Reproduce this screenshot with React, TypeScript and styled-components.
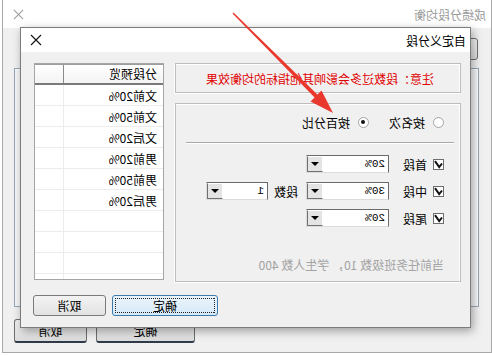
import React from 'react';
import styled, { createGlobalStyle } from 'styled-components';

const GlobalStyle = createGlobalStyle`
  html, body { margin: 0; padding: 0; background: #fff; }
  body {
    font-family: "Noto Sans CJK SC", "Noto Sans", sans-serif;
    font-size: 12px;
    color: #000;
  }
`;

const Stage = styled.div`
  position: relative;
  width: 492px;
  height: 356px;
  overflow: hidden;
  background: #ffffff;
  transform: scaleX(-1);
`;

/* ---------- background window ---------- */
const BackWindow = styled.div`
  position: absolute;
  left: 0;
  top: -1px;
  width: 490px;
  height: 354px;
  box-sizing: border-box;
  border: 1px solid #a9a9a9;
  background: #f0f0f0;
  display: flex;
  flex-direction: column;
`;

const BackTitleBar = styled.div`
  height: 28px;
  background: #fff;
  display: flex;
  align-items: center;
  justify-content: space-between;
  padding: 0 10px 0 5px;
  color: #9a9a9a;
  flex-shrink: 0;
`;

const BackBody = styled.div`
  flex: 1;
  display: flex;
  flex-direction: column;
  padding: 10px 11px 0 12px;
`;

const BackTopButton = styled.div`
  width: 70px;
  height: 22px;
  box-sizing: border-box;
  border: 1px solid #707070;
  border-radius: 3px;
  background: linear-gradient(#f4f4f4, #dedede);
  margin-left: 1px;
`;

const BackPanel = styled.div`
  margin-top: 8px;
  height: 239px;
  box-sizing: border-box;
  border: 1px solid #98a6b5;
  background: #f6f7f8;
  box-shadow: inset 1px 1px 0 #fff;
`;

const BackButtons = styled.div`
  margin-top: 12px;
  display: flex;
  justify-content: flex-end;
  gap: 9px;
`;

const BackButton = styled.div<{ $w: number }>`
  width: ${(p) => p.$w}px;
  height: 24px;
  box-sizing: border-box;
  border: 1px solid #6f6f6f;
  border-bottom: 2px solid #2f3b48;
  border-radius: 3px;
  background: linear-gradient(#f2f2f2, #dcdcdc);
  display: flex;
  align-items: center;
  justify-content: center;
`;

/* ---------- foreground dialog ---------- */
const Dialog = styled.div`
  position: absolute;
  left: 21px;
  top: 27px;
  width: 451px;
  height: 301px;
  box-sizing: border-box;
  border: 1px solid #7c7c7c;
  background: #f0f0f0;
  box-shadow: -2px 3px 9px rgba(0, 0, 0, 0.35);
  display: flex;
  flex-direction: column;
`;

const TitleBar = styled.div`
  height: 24px;
  background: #fff;
  display: flex;
  align-items: center;
  justify-content: space-between;
  padding: 0 9px 0 4px;
  flex-shrink: 0;
`;

const DialogBody = styled.div`
  flex: 1;
  display: flex;
  flex-direction: column;
  padding: 11px 12px 10px 9px;
`;

const MainRow = styled.div`
  display: flex;
  gap: 11px;
  height: 219px;
`;

const LeftColumn = styled.div`
  width: 286px;
  display: flex;
  flex-direction: column;
  gap: 10px;
`;

const Notice = styled.div`
  height: 30px;
  box-sizing: border-box;
  border: 1px solid #bdbdbd;
  box-shadow: inset 1px 1px 0 #fff, 1px 1px 0 #fff;
  display: flex;
  align-items: center;
  padding-left: 26px;
  color: #e00000;
`;

const Group = styled.div`
  height: 179px;
  box-sizing: border-box;
  border: 1px solid #bdbdbd;
  box-shadow: inset 1px 1px 0 #fff, 1px 1px 0 #fff;
  padding: 10px 0 0 16px;
  display: flex;
  flex-direction: column;
`;

const RadioRow = styled.div`
  height: 16px;
  display: flex;
  align-items: center;
`;

const RadioItem = styled.label<{ $gapAfter?: number }>`
  display: flex;
  align-items: center;
  gap: 8px;
  margin-right: ${(p) => p.$gapAfter ?? 0}px;
`;

const RadioCircle = styled.span<{ $on?: boolean }>`
  width: 11px;
  height: 11px;
  box-sizing: border-box;
  border-radius: 50%;
  border: 1px solid #a4a4a4;
  background: #fff;
  display: flex;
  align-items: center;
  justify-content: center;
  &::after {
    content: '';
    width: 4px;
    height: 4px;
    border-radius: 50%;
    background: ${(p) => (p.$on ? '#111' : 'transparent')};
  }
`;

const Separator = styled.div`
  margin: 12px 0 0 -10px;
  width: 268px;
  height: 1px;
  background: #a8a8a8;
  box-shadow: 0 1px 0 #fff;
`;

const SegRows = styled.div`
  margin-top: 12px;
  display: flex;
  flex-direction: column;
  gap: 9px;
`;

const SegRow = styled.div`
  height: 18px;
  display: flex;
  align-items: center;
`;

const CheckBox = styled.span`
  width: 11px;
  height: 11px;
  box-sizing: border-box;
  border: 1px solid #6e6e6e;
  background: #fff;
  display: flex;
  align-items: center;
  justify-content: center;
`;

const SegLabel = styled.span<{ $w: number }>`
  width: ${(p) => p.$w}px;
  padding-left: 6px;
  box-sizing: border-box;
`;

const Combo = styled.div<{ $w: number }>`
  width: ${(p) => p.$w}px;
  height: 18px;
  box-sizing: border-box;
  border-top: 1px solid #6a6a6a;
  border-left: 1px solid #6a6a6a;
  border-right: 1px solid #dcdcdc;
  border-bottom: 1px solid #dcdcdc;
  background: #fff;
  display: flex;
  align-items: stretch;
`;

const ComboText = styled.span`
  flex: 1;
  padding-left: 3px;
  font-family: "Liberation Mono", "DejaVu Sans Mono", monospace;
  font-size: 11px;
  line-height: 16px;
`;

const ComboArrow = styled.span`
  width: 16px;
  box-sizing: border-box;
  border-top: 1px solid #fff;
  border-left: 1px solid #fff;
  border-right: 1px solid #707070;
  border-bottom: 1px solid #707070;
  background: #e4e4e4;
  display: flex;
  align-items: center;
  justify-content: center;
  &::after {
    content: '';
    border-left: 4px solid transparent;
    border-right: 4px solid transparent;
    border-top: 4px solid #000;
  }
`;

const CountLabel = styled.span`
  margin: 0 6px 0 8px;
`;

const Footer = styled.div`
  margin-top: 29px;
  color: #a3a3a3;
`;

/* list */
const ListBox = styled.div`
  width: 130px;
  height: 217px;
  box-sizing: border-box;
  border: 1px solid #a5a5a5;
  background: #fff;
  display: flex;
  flex-direction: column;
  overflow: hidden;
`;

const ListHeader = styled.div`
  height: 18px;
  flex-shrink: 0;
  display: grid;
  grid-template-columns: 100px 1fr;
  border-top: 1px solid #9d9d9d;
  border-bottom: 2px solid #7a7a7a;
  background: linear-gradient(#ffffff, #f3f3f3);
`;

const HeaderCell = styled.div<{ $divider?: boolean }>`
  display: flex;
  align-items: center;
  padding-left: 6px;
  border-right: ${(p) => (p.$divider ? '1px solid #8a8a8a' : 'none')};
  line-height: 1;
`;

const ListRow = styled.div`
  height: 21px;
  flex-shrink: 0;
  box-sizing: border-box;
  display: grid;
  grid-template-columns: 100px 1fr;
  border-bottom: 1px solid #ececec;
`;

const Cell = styled.div<{ $divider?: boolean }>`
  display: flex;
  align-items: center;
  padding-left: 6px;
  border-right: ${(p) => (p.$divider ? '1px solid #ececec' : 'none')};
`;

const ButtonRow = styled.div`
  margin-top: 13px;
  display: flex;
  justify-content: flex-end;
  gap: 6px;
`;

const Button = styled.button<{ $w: number; $focused?: boolean }>`
  width: ${(p) => p.$w}px;
  height: 21px;
  box-sizing: border-box;
  border: 1px solid ${(p) => (p.$focused ? '#3d7bad' : '#7a7a7a')};
  border-radius: 3px;
  background: ${(p) =>
    p.$focused ? 'linear-gradient(#eaf4fb, #d6e9f7)' : 'linear-gradient(#f3f3f3, #e2e2e2)'};
  font: inherit;
  color: #000;
  padding: 0;
  position: relative;
  display: flex;
  align-items: center;
  justify-content: center;
  &::before {
    content: '';
    display: ${(p) => (p.$focused ? 'block' : 'none')};
    position: absolute;
    inset: 2px;
    border: 1px dotted #222;
  }
`;

const ArrowLayer = styled.svg`
  position: absolute;
  left: 0;
  top: 0;
  width: 492px;
  height: 356px;
  pointer-events: none;
`;

const CloseIcon: React.FC<{ size: number; color: string }> = ({ size, color }) => (
  <svg width={size} height={size} viewBox="0 0 12 12">
    <path d="M1 1 L11 11 M11 1 L1 11" stroke={color} strokeWidth="1.1" fill="none" />
  </svg>
);

const Check = () => (
  <svg width="9" height="9" viewBox="0 0 9 9">
    <path d="M1 3.5 L3.8 7 L8 1.2" stroke="#111" strokeWidth="2" fill="none" />
  </svg>
);

const listItems = ['文前20%', '文前50%', '文后20%', '男前20%', '男前50%', '男后20%', '', '', '', ''];

const segs = [
  { name: '首段', val: '20%', count: false },
  { name: '中段', val: '30%', count: true },
  { name: '尾段', val: '20%', count: false },
];

export default function App() {
  return (
    <>
      <GlobalStyle />
      <Stage>
        <BackWindow>
          <BackTitleBar>
            <span>成绩分段均衡</span>
            <CloseIcon size={11} color="#9a9a9a" />
          </BackTitleBar>
          <BackBody>
            <BackTopButton />
            <BackPanel />
            <BackButtons>
              <BackButton $w={99}>确定</BackButton>
              <BackButton $w={73}>取消</BackButton>
            </BackButtons>
          </BackBody>
        </BackWindow>

        <Dialog>
          <TitleBar>
            <span>自定义分段</span>
            <CloseIcon size={12} color="#111" />
          </TitleBar>
          <DialogBody>
            <MainRow>
              <LeftColumn>
                <Notice>注意：段数过多会影响其他指标的均衡效果</Notice>
                <Group>
                  <RadioRow>
                    <RadioItem $gapAfter={20}>
                      <RadioCircle />
                      <span>按名次</span>
                    </RadioItem>
                    <RadioItem>
                      <RadioCircle $on />
                      <span>按百分比</span>
                    </RadioItem>
                  </RadioRow>
                  <Separator />
                  <SegRows>
                    {segs.map((s) => (
                      <SegRow key={s.name}>
                        <CheckBox>
                          <Check />
                        </CheckBox>
                        <SegLabel $w={44}>{s.name}</SegLabel>
                        <Combo $w={83}>
                          <ComboText>{s.val}</ComboText>
                          <ComboArrow />
                        </Combo>
                        {s.count && (
                          <>
                            <CountLabel>段数</CountLabel>
                            <Combo $w={62}>
                              <ComboText>1</ComboText>
                              <ComboArrow />
                            </Combo>
                          </>
                        )}
                      </SegRow>
                    ))}
                  </SegRows>
                  <Footer>当前任务班级数 10， 学生人数 400</Footer>
                </Group>
              </LeftColumn>
              <ListBox>
                <ListHeader>
                  <HeaderCell $divider>分段预览</HeaderCell>
                  <HeaderCell />
                </ListHeader>
                {listItems.map((t, i) => (
                  <ListRow key={i}>
                    <Cell $divider>{t}</Cell>
                    <Cell />
                  </ListRow>
                ))}
              </ListBox>
            </MainRow>
            <ButtonRow>
              <Button $w={106} $focused>确定</Button>
              <Button $w={73}>取消</Button>
            </ButtonRow>
          </DialogBody>
        </Dialog>

        <ArrowLayer viewBox="0 0 492 356">
          <polygon
            points="259.5,13.5 177.4,97.4 181.5,101.5 159,113 170.5,90.5 174.6,94.6 258.5,12.5"
            fill="#e9392f"
          />
        </ArrowLayer>
      </Stage>
    </>
  );
}
